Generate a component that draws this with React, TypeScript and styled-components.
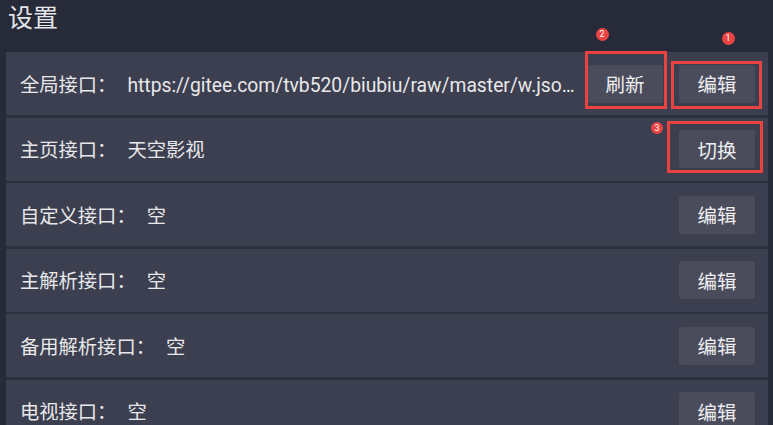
import React from "react";
import styled, { createGlobalStyle } from "styled-components";

const Global = createGlobalStyle`
  html, body { margin: 0; padding: 0; background: #262a39; overflow: hidden; }
  body { font-family: Roboto, "Noto Sans CJK SC", sans-serif; }
`;

const Page = styled.div`
  width: 773px;
  height: 425px;
  background: #262a39;
  overflow: hidden;
  display: flex;
  flex-direction: column;
`;

const Title = styled.h1`
  flex: none;
  margin: 0;
  padding: 2px 0 0 8px;
  height: 50px;
  line-height: 28px;
  font-size: 25px;
  font-weight: 400;
  color: #e4e5e9;
  font-family: "Noto Sans CJK SC", sans-serif;
`;

const Panel = styled.div`
  flex: none;
  margin-left: 6px;
  width: 762px;
  display: flex;
  flex-direction: column;
  gap: 2.5px;
  background: #2b2f3e;
`;

const Row = styled.div`
  height: 63px;
  flex: none;
  display: flex;
  align-items: center;
  padding: 0 13px 0 14px;
  background: #3c3f50;
`;

const Label = styled.div`
  flex: 1;
  min-width: 0;
  padding-right: 6px;
  color: #e8e8ea;
  font-size: 19.3px;
  white-space: nowrap;
  overflow: hidden;
  text-overflow: ellipsis;
  font-family: Roboto, "Noto Sans CJK SC", sans-serif;
`;

const Key = styled.span`
  font-family: "Noto Sans CJK SC", sans-serif;
  margin-right: 11px;
`;

const ButtonWrap = styled.div`
  position: relative;
  flex: none;
  & + & {
    margin-left: 16px;
  }
`;

const Button = styled.button`
  width: 76px;
  height: 38px;
  border: none;
  border-radius: 2px;
  background: #4a4c5c;
  color: #eeeef0;
  font-size: 19.5px;
  font-family: "Noto Sans CJK SC", sans-serif;
  padding: 0;
  display: block;
`;

const Mark = styled.div<{ $t: number; $r: number; $b: number; $l: number }>`
  position: absolute;
  top: ${(p) => p.$t}px;
  right: ${(p) => p.$r}px;
  bottom: ${(p) => p.$b}px;
  left: ${(p) => p.$l}px;
  border: 3px solid #ea4141;
  pointer-events: none;
`;

const Badge = styled.div<{ $x: number; $y: number; $d: number }>`
  position: absolute;
  left: ${(p) => p.$x - p.$d / 2}px;
  top: ${(p) => p.$y - p.$d / 2}px;
  width: ${(p) => p.$d}px;
  height: ${(p) => p.$d}px;
  border-radius: 50%;
  background: #ec4343;
  color: #fff;
  font-size: 9px;
  line-height: ${(p) => p.$d}px;
  text-align: center;
  font-family: Roboto, sans-serif;
`;

type Note = { box: [number, number, number, number]; badge: [number, number, number]; n: string };

const Btn = ({ text, note }: { text: string; note?: Note }) => (
  <ButtonWrap>
    <Button>{text}</Button>
    {note && (
      <>
        <Mark $t={note.box[0]} $r={note.box[1]} $b={note.box[2]} $l={note.box[3]} />
        <Badge $x={note.badge[0]} $y={note.badge[1]} $d={note.badge[2]}>
          {note.n}
        </Badge>
      </>
    )}
  </ButtonWrap>
);

const rows: { key: string; value: string; buttons: { text: string; note?: Note }[] }[] = [
  {
    key: "全局接口：",
    value: "https://gitee.com/tvb520/biubiu/raw/master/w.jso…",
    buttons: [
      { text: "刷新", note: { box: [-14, -4, -6, -2], badge: [15, -30, 13], n: "2" } },
      { text: "编辑", note: { box: [-4, -7, -6, -8], badge: [49, -26, 13], n: "1" } },
    ],
  },
  {
    key: "主页接口：",
    value: "天空影视",
    buttons: [{ text: "切换", note: { box: [-9, -8, -5, -12], badge: [-22, -2, 12], n: "3" } }],
  },
  { key: "自定义接口：", value: "空", buttons: [{ text: "编辑" }] },
  { key: "主解析接口：", value: "空", buttons: [{ text: "编辑" }] },
  { key: "备用解析接口：", value: "空", buttons: [{ text: "编辑" }] },
  { key: "电视接口：", value: "空", buttons: [{ text: "编辑" }] },
];

export default function App() {
  return (
    <Page>
      <Global />
      <Title>设置</Title>
      <Panel>
        {rows.map((r, i) => (
          <Row key={i}>
            <Label>
              <Key>{r.key}</Key>
              {r.value}
            </Label>
            {r.buttons.map((b, j) => (
              <Btn key={j} text={b.text} note={b.note} />
            ))}
          </Row>
        ))}
      </Panel>
    </Page>
  );
}
